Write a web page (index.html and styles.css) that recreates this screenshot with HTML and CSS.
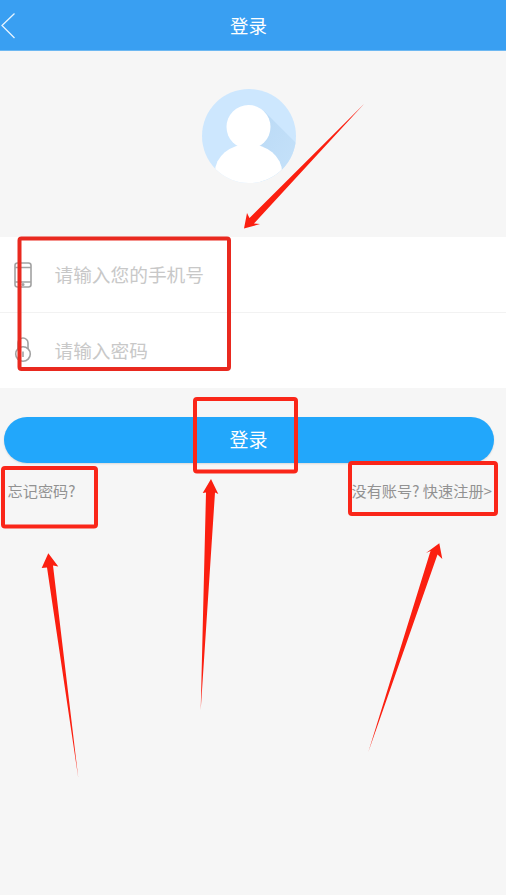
FILE: index.html
```html
<!DOCTYPE html>
<html lang="zh-CN">
<head>
<meta charset="utf-8">
<title>登录</title>
<link rel="stylesheet" href="styles.css">
</head>
<body>
<div class="page">
  <header class="topbar">
    <svg class="back" viewBox="0 0 16 26" width="16" height="26" aria-hidden="true"><path d="M14.5 .5 L2 12.5 L14.5 25"/></svg>
    <h1 class="title">登录</h1>
  </header>
  <div class="avatar-wrap">
    <svg class="avatar" viewBox="0 0 94 94" width="94" height="94" aria-hidden="true">
      <defs>
        <clipPath id="disc"><circle cx="47" cy="47" r="47"/></clipPath>
        <linearGradient id="fade" x1="0" y1="0" x2="1" y2="1">
          <stop offset="0" stop-color="#b9d9f5"/>
          <stop offset="1" stop-color="#c6e2fa"/>
        </linearGradient>
      </defs>
      <circle cx="47" cy="47" r="47" fill="#cde7fe"/>
      <g clip-path="url(#disc)">
        <polygon points="62,22 96,56 96,96 60,96 46,60" fill="url(#fade)"/>
        <circle cx="46.5" cy="38" r="22" fill="#fff"/>
        <ellipse cx="46.5" cy="83" rx="33.5" ry="28" fill="#fff"/>
      </g>
    </svg>
  </div>
  <form class="fields">
    <div class="field">
      <svg class="icon" viewBox="0 0 18 26" width="18" height="26" aria-hidden="true">
        <rect x="1" y="1" width="16" height="24" rx="2.5"/>
        <path d="M1 5.5H17M1 20H17"/>
        <circle cx="9" cy="22.5" r=".8"/>
      </svg>
      <span class="placeholder">请输入您的手机号</span>
    </div>
    <div class="field field-lock">
      <svg class="icon" viewBox="0 0 18 26" width="18" height="26" aria-hidden="true">
        <path d="M4 12V6a5 5 0 0 1 10 0v6"/>
        <circle cx="9" cy="17" r="7.3"/>
        <path d="M9 14.5V20"/>
      </svg>
      <span class="placeholder">请输入密码</span>
    </div>
  </form>
  <button class="submit" type="button"><span class="submit-label">登录</span></button>
  <div class="links">
    <span>忘记密码?</span>
    <span>没有账号? 快速注册&gt;</span>
  </div>
  <svg class="notes" viewBox="0 0 506 895" width="506" height="895" aria-hidden="true">
    <g class="box">
      <rect class="dark" x="19.5" y="238.5" width="209.5" height="130.5" rx="2"/>
      <rect x="195" y="399" width="101" height="72.5" rx="2"/>
      <rect x="3" y="468" width="93" height="58.5" rx="2"/>
      <rect x="350" y="463" width="146" height="51" rx="2"/>
    </g>
    <g class="arrow">
      <polygon points="364,104 254,223.5 260,224 244,228.5 247,213 249.5,218"/>
      <polygon points="48.3,553.3 58.3,566.5 53,565.5 78.3,778 47,567.5 41.7,568"/>
      <polygon points="211,479 218.3,494 215,492.5 200.7,710 206,492.5 202.7,493"/>
      <polygon points="439.3,543.3 442.3,559 437.5,554.5 368.3,752 430.5,551 426,553"/>
    </g>
  </svg>
</div>
</body>
</html>
```
FILE: styles.css
```css
* { box-sizing: border-box; }
html, body { margin: 0; padding: 0; }
body {
  background: #f6f6f6;
  font-family: "Noto Sans CJK SC", "Noto Sans", sans-serif;
  font-weight: 400;
}
.page {
  position: relative;
  width: 506px;
  height: 895px;
  overflow: hidden;
}
.topbar {
  position: relative;
  height: 51px;
  padding-right: 9px;
  background: #399ff2;
  border-bottom: 1px solid #6db8f2;
  display: flex;
  align-items: center;
  justify-content: center;
}
.back {
  position: absolute;
  left: 0;
  top: 13px;
  fill: none;
  stroke: #e6f4ff;
  stroke-width: 1.3;
}
.title {
  margin: 0;
  font-size: 18.5px;
  font-weight: 400;
  line-height: 1;
  color: #fff;
}
.avatar-wrap {
  height: 186px;
  padding: 38px 0 0 202px;
}
.avatar { display: block; }
.fields {
  margin: 0;
  background: #fff;
  height: 151px;
}
.field {
  height: 75px;
  display: flex;
  align-items: center;
  padding-left: 14px;
  gap: 23px;
}
.field + .field {
  height: 76px;
  border-top: 1px solid #f2f2f2;
}
.field-lock .icon { margin-bottom: 2px; }
.icon {
  flex: none;
  fill: none;
  stroke: #a2a2a2;
  stroke-width: 1.6;
}
.placeholder {
  font-size: 18.7px;
  line-height: 1;
  color: #c8c8c8;
  margin-left: -.5px;
}
.submit {
  display: block;
  width: 490px;
  height: 46px;
  margin: 29px 0 0 4px;
  padding: 0 1px 4px 0;
  border: 0;
  border-radius: 23px;
  background: #22a7fb;
  box-shadow: 0 1px 2px rgba(0, 0, 0, .12);
  color: #fff;
  font: inherit;
  font-size: 19px;
}
.submit-label { display: block; }
.links {
  display: flex;
  justify-content: space-between;
  padding: 18px 14px 0 7.5px;
  font-size: 15.2px;
  line-height: 18px;
  color: #929292;
}
.notes {
  position: absolute;
  left: 0;
  top: 0;
  pointer-events: none;
}
.box rect {
  fill: none;
  stroke: #fa2619;
  stroke-width: 4;
}
.box .dark { stroke: #e9291f; }
.arrow polygon { fill: #fb1f10; }
```
